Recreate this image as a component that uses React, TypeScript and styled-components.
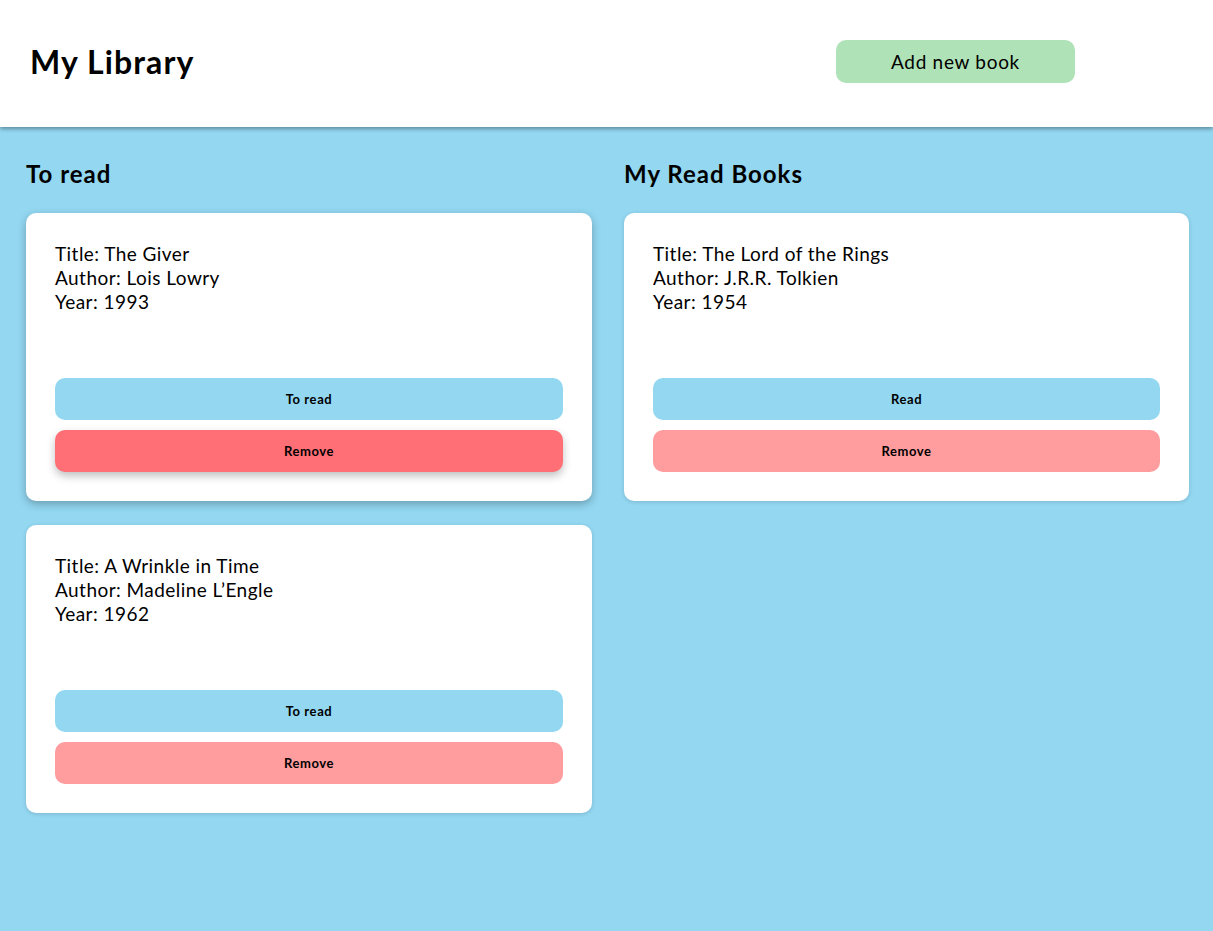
import React from "react";
import styled, { createGlobalStyle } from "styled-components";

const Global = createGlobalStyle`
  html, body { margin: 0; padding: 0; }
  body {
    background: #93d7f1;
    font-family: "Lato", "Noto Sans", sans-serif;
    color: #000;
  }
`;

const Page = styled.div`
  min-height: 931px;
  background: #93d7f1;
`;

const Header = styled.header`
  height: 127px;
  background: #ffffff;
  display: flex;
  align-items: center;
  padding: 0 138px 4px 30px;
  box-shadow: 0 2px 4px rgba(0, 0, 0, 0.35);
  box-sizing: border-box;
  position: relative;
  z-index: 1;
`;

const Logo = styled.h1`
  margin: 0;
  font-size: 32px;
  font-weight: 700;
  letter-spacing: 1.1px;
`;

const AddButton = styled.button`
  margin-left: auto;
  width: 239px;
  height: 43px;
  border: none;
  border-radius: 10px;
  background: #b0e2b7;
  font-family: inherit;
  font-size: 19px;
  letter-spacing: 0.7px;
  color: #000;
  cursor: pointer;
`;

const Columns = styled.main`
  display: grid;
  grid-template-columns: 566px 565px;
  column-gap: 32px;
  padding: 36px 24px 24px 26px;
`;

const Column = styled.section`
  display: flex;
  flex-direction: column;
  gap: 24px;
`;

const ColumnTitle = styled.h2`
  margin: -3px 0 1px;
  height: 28px;
  line-height: 28px;
  font-size: 24px;
  font-weight: 700;
  letter-spacing: 1px;
`;

const Card = styled.article<{ $raised?: boolean }>`
  background: #fff;
  border-radius: 10px;
  padding: 29px;
  display: flex;
  flex-direction: column;
  box-shadow: ${(p) =>
    p.$raised ? "0 3px 8px rgba(0,0,0,0.28)" : "0 1px 4px rgba(0,0,0,0.15)"};
`;

const Info = styled.div`
  font-size: 19px;
  line-height: 24px;
  letter-spacing: 0.45px;
  height: 136px;
`;

const Actions = styled.div`
  display: flex;
  flex-direction: column;
  gap: 10px;
`;

const ActionButton = styled.button<{ $variant: "status" | "remove"; $hover?: boolean }>`
  height: 42px;
  border: none;
  border-radius: 10px;
  font-family: inherit;
  font-size: 13px;
  font-weight: 700;
  letter-spacing: 0.6px;
  color: #000;
  cursor: pointer;
  background: ${(p) =>
    p.$variant === "status" ? "#93d7f1" : p.$hover ? "#ff6f75" : "#ff9c9e"};
  box-shadow: ${(p) => (p.$hover ? "0 4px 8px rgba(0,0,0,0.25)" : "none")};
`;

type Book = { title: string; author: string; year: number };

const toRead: Book[] = [
  { title: "The Giver", author: "Lois Lowry", year: 1993 },
  { title: "A Wrinkle in Time", author: "Madeline L\u2019Engle", year: 1962 },
];

const readBooks: Book[] = [
  { title: "The Lord of the Rings", author: "J.R.R. Tolkien", year: 1954 },
];

function BookCard({ book, status, hover }: { book: Book; status: string; hover?: boolean }) {
  return (
    <Card $raised={hover}>
      <Info>
        <div>Title: {book.title}</div>
        <div>Author: {book.author}</div>
        <div>Year: {book.year}</div>
      </Info>
      <Actions>
        <ActionButton $variant="status">{status}</ActionButton>
        <ActionButton $variant="remove" $hover={hover}>
          Remove
        </ActionButton>
      </Actions>
    </Card>
  );
}

export default function App() {
  return (
    <Page>
      <Global />
      <Header>
        <Logo>My Library</Logo>
        <AddButton>Add new book</AddButton>
      </Header>
      <Columns>
        <Column>
          <ColumnTitle>To read</ColumnTitle>
          {toRead.map((b, i) => (
            <BookCard key={b.title} book={b} status="To read" hover={i === 0} />
          ))}
        </Column>
        <Column>
          <ColumnTitle>My Read Books</ColumnTitle>
          {readBooks.map((b) => (
            <BookCard key={b.title} book={b} status="Read" />
          ))}
        </Column>
      </Columns>
    </Page>
  );
}
